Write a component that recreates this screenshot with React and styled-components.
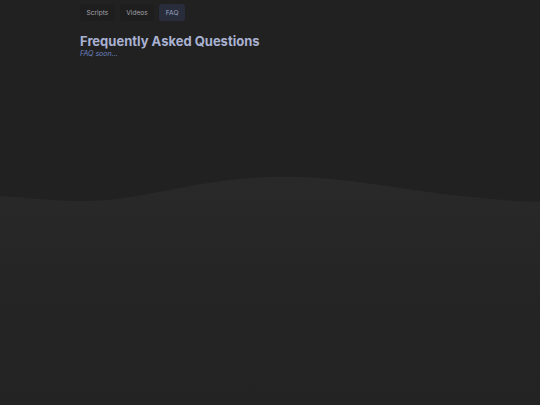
import React from "react";
import styled, { createGlobalStyle } from "styled-components";

const Global = createGlobalStyle`
  html, body { margin: 0; padding: 0; background: #212121; }
  body { font-family: Inter, "Noto Sans", sans-serif; }
`;

const Page = styled.div`
  position: relative;
  width: 540px;
  height: 405px;
  overflow: hidden;
  background: #212121;
`;

const Wave = styled.svg`
  position: absolute;
  left: 0;
  top: 176px;
  width: 540px;
  height: 229px;
`;

const Content = styled.div`
  position: relative;
  padding: 4px 80px 0;
  display: flex;
  flex-direction: column;
`;

const Nav = styled.nav`
  display: flex;
  gap: 5px;
`;

const NavButton = styled.button`
  height: 17px;
  padding: 0 6.5px;
  border: none;
  border-radius: 3px;
  font-family: Inter, sans-serif;
  font-size: 6.6px;
  color: ${(p) => (p.$active ? "#9ba4c4" : "#a3a3a8")};
  background: ${(p) => (p.$active ? "#282c3b" : "#1e1e1e")};
  cursor: pointer;
`;

const Title = styled.h1`
  margin: 13px 0 0;
  font-size: 13px;
  font-weight: 700;
  line-height: 15px;
  color: #aab2d2;
`;

const Note = styled.p`
  margin: 0;
  font-size: 7px;
  line-height: 9px;
  font-style: italic;
  color: #6d83c3;
`;

export default function App() {
  return (
    <Page>
      <Global />
      <Wave viewBox="0 0 540 229" preserveAspectRatio="none">
        <defs>
          <linearGradient id="wg" x1="0" y1="0" x2="0" y2="1">
            <stop offset="0" stopColor="#292929" />
            <stop offset="0.6" stopColor="#242424" />
            <stop offset="1" stopColor="#232323" />
          </linearGradient>
        </defs>
        <path
          d="M0 20 C 30 22, 60 26, 90 25 C 150 23, 190 4, 270 1 C 340 -1, 400 14, 460 20 C 500 24, 520 26, 540 26 L540 229 L0 229 Z"
          fill="url(#wg)"
        />
      </Wave>
      <Content>
        <Nav>
          <NavButton>Scripts</NavButton>
          <NavButton>Videos</NavButton>
          <NavButton $active>FAQ</NavButton>
        </Nav>
        <Title>Frequently Asked Questions</Title>
        <Note>FAQ soon...</Note>
      </Content>
    </Page>
  );
}
